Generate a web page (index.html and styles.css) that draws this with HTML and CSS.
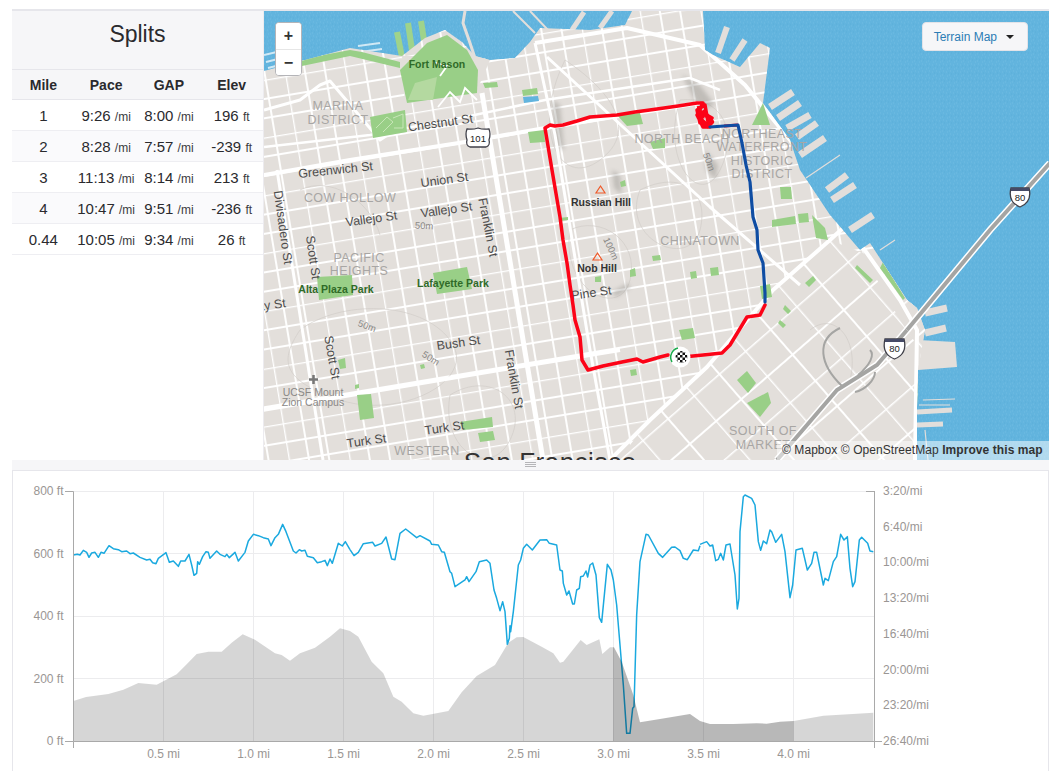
FILE: index.html
```html
<!DOCTYPE html>
<html lang="en">
<head>
<meta charset="utf-8">
<title>Splits</title>
<link rel="stylesheet" href="styles.css">
</head>
<body>
<main class="panel">
  <section class="top">
    <aside class="sidebar">
      <h2 class="title">Splits</h2>
      <table class="splits">
        <thead><tr><th>Mile</th><th>Pace</th><th>GAP</th><th>Elev</th></tr></thead>
        <tbody>
          <tr><td>1</td><td>9:26 <small>/mi</small></td><td>8:00 <small>/mi</small></td><td>196 <small>ft</small></td></tr>
          <tr><td>2</td><td>8:28 <small>/mi</small></td><td>7:57 <small>/mi</small></td><td>-239 <small>ft</small></td></tr>
          <tr><td>3</td><td>11:13 <small>/mi</small></td><td>8:14 <small>/mi</small></td><td>213 <small>ft</small></td></tr>
          <tr><td>4</td><td>10:47 <small>/mi</small></td><td>9:51 <small>/mi</small></td><td>-236 <small>ft</small></td></tr>
          <tr><td>0.44</td><td>10:05 <small>/mi</small></td><td>9:34 <small>/mi</small></td><td>26 <small>ft</small></td></tr>
        </tbody>
      </table>
    </aside>
    <div class="map">
      <svg class="map-art" viewBox="264 11 785 449" xmlns="http://www.w3.org/2000/svg" aria-label="Route map of San Francisco">
        <defs>
          <pattern id="speck" width="7" height="7" patternUnits="userSpaceOnUse">
            <rect width="7" height="7" fill="#62b4de"/>
            <path d="M1 2h1M4 5h1M5 1h1M2 6h1" stroke="#6fbce2" stroke-width="1"/>
            <path d="M3 3h1M6 4h1" stroke="#5aaed9" stroke-width="1"/>
          </pattern>
          <pattern id="grid" width="60" height="57" patternUnits="userSpaceOnUse" patternTransform="translate(276 20) rotate(-9.5)">
            <path d="M0 0H60M0 0V57" stroke="#fff" stroke-width="2.6" fill="none"/>
            <path d="M0 19H60M0 38H60M20 0V57M40 0V57" stroke="#fff" stroke-width="1.900" fill="none"/>
          </pattern>
          <pattern id="soma" width="68" height="68" patternUnits="userSpaceOnUse" patternTransform="translate(700 300) rotate(-41)">
            <path d="M0 0H68M0 0V68" stroke="#fff" stroke-width="2.800" fill="none"/>
            <path d="M0 34H68M34 0V68" stroke="#fff" stroke-width="2" fill="none"/>
          </pattern>
          <pattern id="checks" width="5" height="5" patternUnits="userSpaceOnUse">
            <rect width="5" height="5" fill="#fff"/>
            <path d="M0 0h2.5v2.5H0zM2.5 2.5H5V5H2.5z" fill="#111"/>
          </pattern>
          <clipPath id="land-clip">
            <path d="M264 71L350 48 402 56 425 38 445 30 462 42 475 56 490 60 515 58 530 42 540 28 590 30 625 25 632 11 703 11 705 50 713 55 740 67 760 43 770 48 763 103 790 140 800 170 830 215 860 250 870 243 907 300 917 308 925 330 918 370 917 407 917 460 264 460Z"/>
          </clipPath>
        </defs>

        <rect x="264" y="11" width="785" height="449" fill="url(#speck)"/>

        <g class="pier">
          <path class="pier-green" d="M397 32L402 57M408 23L412 50M421 21L425 47" stroke-width="6"/>
          <path d="M727 27L718 53M745 40L732 60" stroke-width="6"/>
          <path d="M793 92L770 107M800 103L778 118M810 115L787 128M817 123L797 137M825 138L800 155" stroke-width="7"/>
          <path d="M847 175L827 190M855 185L832 200M873 215L850 230" stroke-width="7"/>
          <path d="M925 313L947 308M925 333L946 328" stroke-width="7"/>
          <path d="M917 412L952 410M917 425L943 424" stroke-width="5"/>
          <path d="M572 30L584 12M600 28L612 11M650 20L664 11" stroke-width="5"/>
          <path d="M465 11L463 23 470 43 478 67" stroke-width="3"/>
          <path d="M513 11L535 33M530 11L548 30" stroke-width="2"/>
          <path class="thin-pier" d="M806 178L840 155M880 250L895 240M919 405H950M923 400L955 399M925 430L928 460"/>
        </g>
        <path class="big-pier" d="M918 340L955 342 957 367 918 370Z"/>
        <path class="dock" d="M358 46L380 43M360 52L382 49M362 58L384 55M378 62L386 61M379 68L387 67M264 55L285 50M266 62L290 56M268 68L292 62"/>

        <path class="land" d="M264 71L350 48 402 56 425 38 445 30 462 42 475 56 490 60 515 58 530 42 540 28 590 30 625 25 632 11 703 11 705 50 713 55 740 67 760 43 770 48 763 103 790 140 800 170 830 215 860 250 870 243 907 300 917 308 925 330 918 370 917 407 917 460 264 460Z"/>

        <g clip-path="url(#land-clip)">
          <rect x="264" y="11" width="785" height="449" fill="url(#grid)"/>
          <path class="land" d="M610 470L650 420 707 367 773 290 830 240 880 260 930 320 930 470Z"/>
          <path class="soma-fill" d="M610 470L650 420 707 367 773 290 830 240 880 260 930 320 930 470Z"/>
          <path class="land-top" d="M402 56L478 56 490 60 478 88 405 104Z"/>
          <path class="land-top" d="M860 250L905 305 917 310 917 345 900 320Z"/>

          <g class="contour">
            <path d="M300 330C340 300 420 300 450 340S400 420 340 400 280 360 300 330Z"/>
            <path d="M450 395C490 370 530 400 510 440S440 450 450 395Z"/>
            <path d="M565 60C610 90 640 130 600 160S530 130 565 60Z"/>
            <path d="M640 190C680 170 710 190 700 230S620 240 640 190Z"/>
            <path d="M570 230C600 215 640 240 630 280S560 290 570 230Z"/>
            <path d="M680 100C720 95 740 130 720 170S660 160 680 100Z"/>
            <path d="M810 330C835 310 860 340 850 380"/>
            <path d="M300 190C330 175 370 200 380 235"/>
          </g>

          <g class="shade">
            <path d="M552 100L560 105 564 150 556 145Z"/>
            <path d="M612 170L620 175 622 195 614 188Z"/>
            <path d="M682 75L700 85 715 105 700 110Z"/>
            <path d="M705 150L718 165 716 180 706 170Z"/>
            <path d="M612 292L628 283 630 288 616 297Z"/>
          </g>

          <path class="road" stroke-width="4" d="M264 175L350 160 465 142 545 128 700 103"/>
          <path class="road" stroke-width="2.500" d="M264 147L370 135 465 117 545 100 690 78 720 90"/>
          <path class="road" stroke-width="4" d="M263 410L487 372 620 350"/>
          <path class="road" stroke-width="3" d="M264 110L300 100 320 85 330 81 380 140 395 130"/>
          <path class="road" stroke-width="5" d="M482 93L543 460"/>
          <path class="road" stroke-width="3" d="M277 170L323 460"/>
          <path class="road" stroke-width="3" d="M535 43L555 135 590 350 610 460"/>
          <path class="road" stroke-width="3" d="M547 57L710 207 800 285"/>
          <path class="road" stroke-width="4" d="M535 43L627 28 700 45 745 85 790 140 840 215 900 300 917 330 915 460"/>
          <path class="road" stroke-width="4" d="M610 460L650 420 707 367 773 290 830 240 868 205"/>

          <g class="park">
            <path d="M302 59L350 50 362 52 400 62 400 68 350 56 302 66Z"/>
            <path d="M400 70L427 43 447 35 467 50 478 70 477 93 407 103Z"/>
            <path d="M370 117L405 110 407 132 373 138Z"/>
            <path d="M317 277L352 275 353 295 319 300Z"/>
            <path d="M433 273L467 267 472 289 437 294Z"/>
            <path d="M483 83L497 82 498 87 485 88Z"/>
            <path d="M522 90L537 88 538 94 523 96Z"/>
            <path d="M528 132L544 130 545 142 530 143Z"/>
            <path d="M617 115L640 113 643 124 627 126Z"/>
            <path d="M650 142L665 138 665 148 653 149Z"/>
            <path d="M780 187L791 187 792 199 781 199Z"/>
            <path d="M772 220L795 216 796 224 772 227Z"/>
            <path d="M798 214L808 213 809 222 799 223Z"/>
            <path d="M812 215L825 228 828 240 816 238Z"/>
            <path d="M752 125L763 103 770 125Z"/>
            <path d="M679 330L693 328 695 338 682 340Z"/>
            <path d="M737 380L747 371 756 383 748 393Z"/>
            <path d="M747 403L768 392 771 403 760 417Z"/>
            <path d="M357 395L371 394 374 418 360 420Z"/>
            <path d="M460 422L492 417 493 427 463 430Z"/>
            <path d="M478 433L493 431 495 440 480 442Z"/>
            <path d="M760 286L770 284 772 297 762 299Z"/>
            <path d="M883 262L905 298 903 300 880 268ZM918 380L920 405 917 405Z"/>
            <path d="M710 268L718 267 719 275 711 276ZM690 272L696 271 697 278 691 279ZM652 256L660 255 661 260 653 261ZM559 218L568 217 568 220 560 221ZM620 182L625 180 626 186 621 187ZM595 277L601 276 601 282 595 282ZM630 370L636 369 637 375 631 376ZM630 270L635 268 636 276 630 277ZM338 360L345 358 346 368 340 369ZM420 365L424 364 425 368 421 369ZM355 385L359 384 359 388 355 389ZM805 283L813 276 816 280 809 287ZM780 320L786 325 783 328 778 323ZM785 305L791 311 788 314 783 309ZM857 265L873 280 870 283 855 268Z"/>
          </g>
          <path class="park-light" d="M415 83L437 77 433 100 408 100Z"/>
          <path class="trail" d="M433 62L447 66 440 76M438 107L450 92 460 102 465 88 477 100"/>
          <path class="park-line" d="M376 128L387 117 393 122 383 132M393 118L403 114 403 128 394 128"/>
          <path class="water-spot" d="M523 97L538 96 539 101 524 103Z"/>
          <g class="rail">
            <path class="hw-edge" d="M777 460L837 390 877 365 907 330 990 230 1050 163"/>
            <path class="hw" d="M777 460L837 390 877 365 907 330 990 230 1050 163"/>
            <path class="ramp" d="M842 386C820 365 815 340 840 328M858 375C870 365 875 355 870 350M855 392C865 390 875 380 875 372"/>
          </g>
        </g>
        <path class="hw-edge" d="M907 330L990 230 1050 163"/>
        <path class="hw" d="M907 330L990 230 1050 163"/>

        <text class="big" x="550" y="471" text-anchor="middle">San Francisco</text>

        <g class="hood" text-anchor="middle">
          <text x="338" y="110">MARINA</text><text x="338" y="124">DISTRICT</text>
          <text x="350" y="202">COW HOLLOW</text>
          <text x="359" y="262">PACIFIC</text><text x="359" y="275">HEIGHTS</text>
          <text x="682" y="143">NORTH BEACH</text>
          <text x="762" y="138">NORTHEAST</text><text x="762" y="151">WATERFRONT</text>
          <text x="762" y="165">HISTORIC</text><text x="762" y="178">DISTRICT</text>
          <text x="700" y="245">CHINATOWN</text>
          <text x="763" y="435">SOUTH OF</text><text x="763" y="449">MARKET</text>
          <text x="427" y="455">WESTERN</text>
        </g>

        <g class="street" text-anchor="middle">
          <text transform="translate(441 127) rotate(-8)">Chestnut St</text>
          <text transform="translate(336 174) rotate(-6)">Greenwich St</text>
          <text transform="translate(445 184) rotate(-8)">Union St</text>
          <text transform="translate(447 214) rotate(-8)">Vallejo St</text>
          <text transform="translate(372 223) rotate(-8)">Vallejo St</text>
          <text transform="translate(279 228) rotate(82)">Divisadero St</text>
          <text transform="translate(309 258) rotate(82)">Scott St</text>
          <text transform="translate(484 228) rotate(79)">Franklin St</text>
          <text transform="translate(510 380) rotate(80)">Franklin St</text>
          <text transform="translate(328 358) rotate(80)">Scott St</text>
          <text transform="translate(592 297) rotate(-8)">Pine St</text>
          <text transform="translate(459 347) rotate(-8)">Bush St</text>
          <text transform="translate(445 432) rotate(-8)">Turk St</text>
          <text transform="translate(367 445) rotate(-8)">Turk St</text>
          <text transform="translate(272 309) rotate(-8)">ay St</text>
        </g>

        <g class="contour-label" text-anchor="middle">
          <text transform="translate(424 229) rotate(3)">50m</text>
          <text transform="translate(366 329) rotate(20)">50m</text>
          <text transform="translate(429 361) rotate(32)">50m</text>
          <text transform="translate(608 250) rotate(65)">100m</text>
          <text transform="translate(706 163) rotate(70)">50m</text>
        </g>

        <g class="place" text-anchor="middle">
          <text x="601" y="206">Russian Hill</text>
          <text x="597" y="272">Nob Hill</text>
        </g>
        <path class="peak" d="M600.500 186L605 193H596ZM597.500 253L602 260H593Z"/>

        <g class="park-label" text-anchor="middle">
          <text x="437" y="68">Fort Mason</text>
          <text x="336" y="293">Alta Plaza Park</text>
          <text x="453" y="287">Lafayette Park</text>
        </g>

        <g class="campus" text-anchor="middle">
          <text x="313" y="396">UCSF Mount</text>
          <text x="313" y="406">Zion Campus</text>
        </g>
        <path class="cross" d="M313.500 375V384M309 379.500H318"/>

        <path class="shield" d="M467 129C470 129 472 130 478 128 484 130 486 129 489 129 491 134 490 137 489 140 490 143 489 146 486 147H470C467 146 466 143 467 140 466 137 465 134 467 129Z"/>
        <text class="shield-text" x="478" y="142" text-anchor="middle">101</text>
        <path class="shield" d="M1011 188H1029C1031 196 1030 203 1020 207 1010 203 1009 196 1011 188Z"/>
        <path class="shield-cap" d="M1011 188H1029V191H1011Z"/>
        <text class="shield-text" x="1020" y="201" text-anchor="middle">80</text>
        <path class="shield" d="M885 339H904C906 347 905 355 894.500 359 884 355 883 347 885 339Z"/>
        <path class="shield-cap" d="M885 339H904V342H885Z"/>
        <text class="shield-text" x="894.500" y="352" text-anchor="middle">80</text>

        <path class="route-red" d="M683 357L703 355 722 353 730 345 747 317 760 315 765 305M668 355L660 357 643 362 637 359 622 362 603 366 588 370 582 360 580 337 575 320 573 305 570 285 567 263 563 240 560 217 552 170 545 128 550 125 555 126 563 125 577 121 590 117 617 115 635 112 657 109 678 106 697 103 703 103 697 115 703 127 710 127 700 123 697 110 705 105 708 122 712 118 703 113 700 118 706 126"/>
        <path class="route-red-thick" d="M699 106L701 120 708 126 712 122 704 112 702 118"/>
        <path class="route-red-thin" d="M724 126L738 125"/>
        <path class="route-blue" d="M710 127L738 125 742 143 746 165 750 182 753 217 757 230 758 250 763 263 765 293 765 302"/>

        <circle class="finish" cx="680" cy="357" r="10.500"/>
        <path class="finish-arc" d="M672 362A9.500 9.500 0 0 1 678 348"/>
        <circle class="finish-flag" cx="681.500" cy="357" r="6"/>
      </svg>

      <div class="zoom-ctl">
        <button class="zoom-btn">+</button>
        <button class="zoom-btn">−</button>
      </div>
      <button class="style-btn">Terrain Map <span class="caret"></span></button>
      <div class="attrib">© Mapbox © OpenStreetMap <b>Improve this map</b></div>
    </div>
  </section>

  <div class="resizer"><span class="grip"></span></div>

  <section class="chart">
    <svg class="chart-art" viewBox="13 471 1035 300" xmlns="http://www.w3.org/2000/svg" aria-label="Elevation and pace chart">
      <g class="grid">
        <path d="M73 491.500H874M73 553.500H874M73 616.500H874M73 678.500H874"/>
        <path d="M163.500 491V741M253.500 491V741M343.500 491V741M433.500 491V741M523.500 491V741M613.500 491V741M703.500 491V741M793.500 491V741"/>
      </g>

      <g transform="translate(0 465) scale(.33333)">
        <path class="elev" d="M220 829V708L258 696 325 687 370 674 415 654 470 659 530 628 560 598 590 567 625 560 665 560 695 533 728 508 765 524 825 565 845 570 870 587 900 565 945 548 990 515 1020 490 1050 498V829Z"/>
      </g>
      <g transform="translate(350 465) scale(.33333)">
        <path class="elev" d="M0 829V498L25 515 65 590 100 625 130 695 155 710 190 745 220 752 295 738 335 682 380 633 435 600 475 533 500 517 520 516 575 545 610 565 630 593 640 590 692 525 710 540 748 523 757 567 780 547 789 547V829Z"/>
      </g>
      <g transform="translate(700 465) scale(.33333)">
        <path class="elev" d="M281 829V768L370 752 520 743V829Z"/>
      </g>

      <g transform="translate(0 465) scale(.33333)">
        <path class="pace" d="M220 270L232 268 240 270 250 256 260 262 267 277 275 264 285 262 295 277 303 262 312 265 327 242 340 251 355 254 365 260 380 258 390 266 400 264 420 277 440 285 450 283 458 293 468 296 475 280 498 263 508 292 520 288 535 304 542 288 555 288 567 268 575 300 582 331 590 325 593 290 598 298 608 275 618 260 625 262 630 280 650 258 660 268 675 275 680 268 688 278 705 262 715 288 735 262 745 228 760 208 775 212 790 218 805 222 813 242 825 218 835 208 848 178 858 200 880 258 888 264 898 254 905 258 915 256 922 274 940 278 952 293 965 290 975 286 982 302 990 282 997 295 1015 235 1027 243 1036 230 1050 254"/>
      </g>
      <g transform="translate(350 465) scale(.33333)">
        <path class="pace" d="M0 254L12 272 25 262 40 236 68 232 75 243 95 235 108 216 125 282 135 284 150 205 167 192 200 218 210 212 240 228 245 238 265 240 275 260 283 262 300 320 305 325 315 365 345 345 350 335 357 350 378 320 388 290 410 285 420 295 432 375 440 400 450 437 458 410 465 440 472 538 478 520 480 482 482 500 490 440 505 300 512 285 520 250 530 238 547 255 570 225 590 224 598 235 620 240 630 315 637 318 640 355 650 390 657 378 668 417 673 417 680 375 688 370 692 335 700 333 708 318 713 336 720 300 728 294 738 330 748 458 755 472 772 298 783 315 790 345 800 420 820 660 830 805 840 805 848 730 852 725 860 450 870 290 888 208 895 210 925 265 938 277 965 247 975 246 990 257 1000 280 1012 284 1030 255 1045 257 1050 242"/>
      </g>
      <g transform="translate(700 465) scale(.33333)">
        <path class="pace" d="M0 238L20 230 30 243 38 240 47 287 55 283 62 265 70 285 78 240 90 237 105 330 112 432 117 400 120 200 130 95 135 90 155 100 165 120 175 230 182 256 190 228 200 236 210 195 215 200 227 232 245 208 255 260 270 398 278 360 288 255 307 250 322 315 335 295 342 262 350 262 370 360 375 340 385 347 400 290 410 275 422 208 432 225 442 215 450 310 458 365 465 350 478 225 485 217 503 235 510 258 520 260"/>
      </g>

      <g transform="translate(350 465) scale(.33333)">
        <path class="elev-dark" d="M789 829V547L792 547 815 590 850 690 870 772 930 762 1020 747 1050 768V829Z"/>
      </g>
      <g transform="translate(700 465) scale(.33333)">
        <path class="elev-dark" d="M0 829V768L30 777 100 777 170 775 200 776 240 770 281 768V829Z"/>
      </g>

      <g class="axis">
        <path d="M65 491.500H73.500V741.500H65M73.500 741.500V748M73.500 741.500H874.500M874.500 491V748M866 491.500H874.500M874.500 741.500H882"/>
      </g>

      <g class="tick" text-anchor="end">
        <text x="63.500" y="495">800 ft</text>
        <text x="63.500" y="558">600 ft</text>
        <text x="63.500" y="620">400 ft</text>
        <text x="63.500" y="683">200 ft</text>
        <text x="63.500" y="745">0 ft</text>
      </g>
      <g class="tick" text-anchor="middle">
        <text x="163.500" y="758">0.5 mi</text>
        <text x="253.500" y="758">1.0 mi</text>
        <text x="343.500" y="758">1.5 mi</text>
        <text x="433.500" y="758">2.0 mi</text>
        <text x="523.500" y="758">2.5 mi</text>
        <text x="613.500" y="758">3.0 mi</text>
        <text x="703.500" y="758">3.5 mi</text>
        <text x="793.500" y="758">4.0 mi</text>
      </g>
      <g class="tick">
        <text x="883" y="495">3:20/mi</text>
        <text x="883" y="531">6:40/mi</text>
        <text x="883" y="566">10:00/mi</text>
        <text x="883" y="602">13:20/mi</text>
        <text x="883" y="638">16:40/mi</text>
        <text x="883" y="674">20:00/mi</text>
        <text x="883" y="709">23:20/mi</text>
        <text x="883" y="745">26:40/mi</text>
      </g>
    </svg>
  </section>
</main>
</body>
</html>
```
FILE: styles.css
```css
* { box-sizing: border-box; }
html, body { margin: 0; height: 771px; overflow: hidden; background: #fff; }
body {
  padding: 9px 13px 0 12px;
  font-family: "Liberation Sans", Arial, sans-serif;
  color: #2a2a2e;
}
.panel {
  height: 762px;
  border-top: 2px solid #e6e6eb;
  display: flex;
  flex-direction: column;
}

.top { display: flex; height: 449px; flex: none; }
.sidebar { width: 252px; flex: none; border-right: 1px solid #ecebef; }
.title {
  margin: 0;
  height: 59px;
  padding-top: 10px;
  background: #f6f6f8;
  border-bottom: 1px solid #e6e6eb;
  font-size: 23px;
  font-weight: 400;
  line-height: 26px;
  text-align: center;
}
.splits { width: 251px; border-collapse: separate; border-spacing: 0; table-layout: fixed; font-size: 15px; }
.splits th {
  height: 30px;
  padding: 0;
  background: #f6f6f8;
  font-size: 14px;
  font-weight: 700;
  border-bottom: 1px solid #e6e6eb;
}
.splits td { height: 31px; padding: 0; text-align: center; border-bottom: 1px solid #eeeef2; white-space: nowrap; }
.splits tbody tr:nth-child(even) td { background: #fafafc; }
.splits small { font-size: 12px; color: #3a3a40; }

.map { position: relative; flex: 1; overflow: hidden; background: #62b4de; }
.map-art { display: block; width: 100%; height: 100%; }
.land, .land-top, .big-pier { fill: #e3dfdb; }
.soma-fill { fill: url(#soma); }
.pier path { fill: none; stroke: #e2dedb; stroke-linecap: butt; }
.pier .pier-green { stroke: #9fd38b; }
.pier .thin-pier { stroke-width: 1.200; }
.dock { fill: none; stroke: #fff; stroke-width: 2; opacity: .7; }
.road { fill: none; stroke: #fff; stroke-linejoin: round; }
.contour { fill: none; stroke: #d1cdc8; stroke-width: .7; }
.shade path { fill: #807e78; opacity: .35; filter: blur(2px); }
.park path { fill: #99cf87; }
.park-light { fill: #b4d9a0; }
.trail { fill: none; stroke: #fff; stroke-width: 1.800; }
.park-line { fill: none; stroke: #c8e6b8; stroke-width: 1; }
.water-spot { fill: #62b4de; }
.hw-edge { fill: none; stroke: #fff; stroke-width: 7; }
.hw { fill: none; stroke: #a5a5a3; stroke-width: 4; }
.ramp { fill: none; stroke: #a5a5a3; stroke-width: 2; }
.big { font-size: 26px; fill: #333; letter-spacing: .5px; }
.hood text { font-size: 12.500px; fill: #a8a6a4; letter-spacing: .4px; }
.street text { font-size: 12.500px; fill: #4c4c4c; }
.contour-label text { font-size: 9.500px; fill: #8a8886; }
.place text { font-size: 10.500px; font-weight: 700; fill: #333; }
.park-label text { font-size: 10.500px; font-weight: 700; fill: #2f6b28; }
.campus text { font-size: 10.500px; fill: #8a8886; }
.peak { fill: none; stroke: #ef5a2a; stroke-width: 1.200; }
.cross { fill: none; stroke: #777; stroke-width: 2.500; }
.shield { fill: #fff; stroke: #3f3f48; stroke-width: 1.300; }
.shield-cap { fill: #454a66; }
.shield-text { font-size: 9.500px; fill: #222; }
.route-red { fill: none; stroke: #fc0317; stroke-width: 3.500; stroke-linejoin: round; stroke-linecap: round; }
.route-red-thick { fill: none; stroke: #fc0317; stroke-width: 4.500; stroke-linejoin: round; }
.route-red-thin { fill: none; stroke: #fc0317; stroke-width: 3; }
.route-blue { fill: none; stroke: #0f4da3; stroke-width: 3.200; stroke-linejoin: round; stroke-linecap: round; }
.finish { fill: #fff; }
.finish-arc { fill: none; stroke: #1dab4d; stroke-width: 1.500; }
.finish-flag { fill: url(#checks); }

.zoom-ctl {
  position: absolute;
  left: 11px;
  top: 11px;
  width: 27px;
  border: 1px solid #b4b4b8;
  border-radius: 4px;
  background: #fff;
  overflow: hidden;
}
.zoom-btn {
  display: block;
  width: 100%;
  height: 26px;
  padding: 0;
  border: 0;
  background: #fff;
  color: #333;
  font: 700 16px/26px "Liberation Sans", Arial, sans-serif;
  text-align: center;
}
.zoom-btn + .zoom-btn { border-top: 1px solid #e6e6e6; }
.style-btn {
  position: absolute;
  right: 21px;
  top: 11px;
  width: 106px;
  height: 29px;
  padding: 0 2px 0 0;
  border: 1px solid #e3e3e8;
  border-radius: 4px;
  background: #f6f6f8;
  color: #2c7db5;
  font: 12px "Liberation Sans", Arial, sans-serif;
}
.caret {
  display: inline-block;
  margin-left: 6px;
  vertical-align: 2px;
  border-left: 4px solid transparent;
  border-right: 4px solid transparent;
  border-top: 4px solid #222;
}
.attrib {
  position: absolute;
  right: 0;
  bottom: 0;
  width: 272px;
  height: 19px;
  background: rgba(255, 255, 255, .5);
  padding-left: 5px;
  color: #333;
  font-size: 12px;
  letter-spacing: .07px;
  line-height: 19px;
  white-space: nowrap;
}

.resizer {
  height: 11px;
  flex: none;
  display: flex;
  justify-content: center;
  background: #f6f6f8;
  border-bottom: 1px solid #e6e6eb;
  padding-top: 2px;
  padding-right: 1px;
}
.grip {
  display: block;
  width: 11px;
  height: 5px;
  border-top: 1px solid #b5b5b8;
  border-bottom: 1px solid #b5b5b8;
  background: linear-gradient(#b5b5b8, #b5b5b8) center / 100% 1px no-repeat;
}

.chart { flex: 1; min-height: 0; border-left: 1px solid #e6e6eb; border-right: 1px solid #e6e6eb; }
.chart-art { display: block; width: 100%; height: 100%; }
.grid path { fill: none; stroke: #ececee; stroke-width: 1; }
.elev { fill: rgba(0, 0, 0, .16); }
.elev-dark { fill: rgba(0, 0, 0, .28); }
.pace { fill: none; stroke: #1aa9df; stroke-width: 4.500; stroke-linejoin: round; }
.axis path { fill: none; stroke: #a9a9a9; stroke-width: 1; }
.tick text { font-size: 12px; fill: #9a9694; }
```
